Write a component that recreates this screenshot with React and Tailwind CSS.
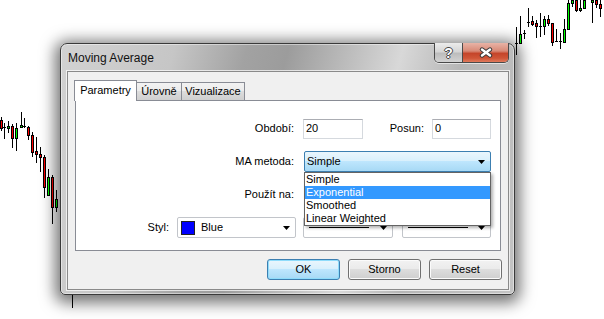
import React from 'react';

// [x, wickTop, wickBottom, bodyTop, bodyBottom, type]  type: r = bear, g = bull, d = doji, w = wick only
const candles = [
  [1, 117, 131, 120, 128, 'r'],
  [4, 123, 139, 127, 127, 'd'],
  [8, 121, 133, 126, 128, 'g'],
  [12, 124, 148, 126, 138, 'r'],
  [16, 123, 151, 128, 138, 'g'],
  [21, 112, 127, 125, 127, 'g'],
  [24, 118, 128, 126, 126, 'd'],
  [28, 126, 140, 127, 135, 'r'],
  [32, 132, 157, 135, 152, 'r'],
  [36, 137, 163, 151, 154, 'r'],
  [40, 147, 172, 154, 157, 'r'],
  [44, 155, 198, 157, 187, 'r'],
  [48, 169, 196, 177, 195, 'g'],
  [52, 175, 224, 177, 207, 'r'],
  [56, 190, 212, 199, 207, 'g'],
  [72, 290, 308, 0, 0, 'w'],
  [516, 27, 55, 43, 43, 'd'],
  [520, 16, 43, 34, 43, 'g'],
  [524, 30, 39, 33, 33, 'd'],
  [528, 8, 27, 22, 22, 'd'],
  [532, 16, 26, 21, 24, 'r'],
  [536, 20, 38, 23, 26, 'r'],
  [540, 13, 37, 26, 26, 'd'],
  [544, 16, 35, 19, 26, 'g'],
  [548, 15, 26, 19, 23, 'r'],
  [552, 23, 46, 23, 42, 'r'],
  [556, 29, 42, 41, 41, 'd'],
  [560, 33, 49, 41, 41, 'd'],
  [564, 19, 42, 29, 42, 'g'],
  [568, 0, 30, 3, 29, 'g'],
  [572, 0, 7, 0, 3, 'g'],
  [576, 0, 12, 0, 10, 'r'],
  [580, 0, 12, 8, 10, 'g'],
  [584, 0, 8, 0, 8, 'g'],
  [592, 0, 23, 0, 2, 'g'],
  [596, 0, 8, 0, 4, 'r'],
  [600, 0, 17, 4, 8, 'r'],
];

const Candle = ({ c }) => {
  const [x, wt, wb, bt, bb, t] = c;
  return (
    <g>
      <rect x={x} y={wt} width={1} height={wb - wt} fill="#000" />
      {t === 'd' && <rect x={x - 1} y={bt} width={3} height={1} fill="#000" />}
      {(t === 'r' || t === 'g') && (
        <>
          <rect x={x - 1} y={bt} width={3} height={bb - bt + 1} fill="#000" />
          <rect x={x} y={bt + 1} width={1} height={Math.max(bb - bt - 1, 0)} fill={t === 'r' ? '#ff0000' : '#00ff00'} />
        </>
      )}
    </g>
  );
};

const Arrow = () => (
  <svg width="7" height="4" viewBox="0 0 7 4" className="shrink-0">
    <path d="M0 0h7L3.5 4z" fill="#000" />
  </svg>
);

const Label = ({ w, children }) => (
  <div className={`${w} shrink-0 text-right pr-px`}>{children}</div>
);

const Combo = ({ className = '', children }) => (
  <div className={`h-[21px] shrink-0 flex items-center border border-[#c2c5ca] rounded-[2px] bg-white pl-[3px] pr-[5px] ${className}`}>
    <div className="flex-1 flex items-center min-w-0">{children}</div>
    <Arrow />
  </div>
);

const Button = ({ children, primary }) => (
  <button
    className={
      primary
        ? 'w-[73px] h-[21px] rounded-[3px] border border-[#3c7fb1] bg-[linear-gradient(#eaf6fd,#d9f0fc_45%,#bee6fd_50%,#a7d9f5)] shadow-[inset_0_0_0_1px_#8fdcfb] text-[11px] font-normal text-black'
        : 'w-[73px] h-[21px] rounded-[3px] border border-[#707070] bg-[linear-gradient(#f2f2f2,#ebebeb_45%,#dddddd_50%,#cfcfcf)] shadow-[inset_0_0_0_1px_#fbfbfb] text-[11px] font-normal text-black'
    }
  >
    {children}
  </button>
);

export default function App() {
  const methods = ['Simple', 'Exponential', 'Smoothed', 'Linear Weighted'];

  return (
    <div className="relative w-[604px] h-[319px] overflow-hidden bg-white font-['Liberation_Sans',Arial,sans-serif] text-[11px] leading-none text-black">
      <svg className="absolute inset-0" width="604" height="319" shapeRendering="crispEdges">
        {candles.map((c, i) => (
          <Candle key={i} c={c} />
        ))}
      </svg>

      {/* dialog window */}
      <div className="absolute left-[60px] top-[43px] w-[455px] h-[252px] flex flex-col rounded-t-[7px] rounded-b-[5px] border border-[#3a3a3a] bg-[linear-gradient(105deg,#d2d2d2_0%,#c6c6c6_22%,#a2a2a2_36%,#9c9c9c_44%,#c2c2c2_58%,#d8d8d8_66%,#b6b6b6_78%,#c4c4c4_100%)] shadow-[0_3px_15px_5px_rgba(0,0,0,0.55),inset_0_0_0_1px_rgba(255,255,255,0.45)]">
        <div className="h-[27px] flex items-start justify-between shrink-0">
          <div className="self-center pl-[7px] pt-px text-[12px] text-[#111]">Moving Average</div>
          <div className="flex -mt-px mr-[5px] h-[20px] rounded-b-[5px] border border-t-0 border-[#4a4a4a] overflow-hidden shadow-[0_1px_0_rgba(255,255,255,0.6)]">
            <div className="w-[28px] h-full flex items-center justify-center border-r border-[#4a4a4a] bg-[linear-gradient(#ebebeb,#d6d6d6_45%,#bdbdbd_55%,#d2d2d2)]">
              <span className="text-[14px] font-bold text-white [text-shadow:-1px_0_#444,1px_0_#444,0_-1px_#444,0_1px_#444]">?</span>
            </div>
            <div className="w-[45px] h-full flex items-center justify-center bg-[linear-gradient(#e8b3a6,#d88a77_42%,#c5452a_55%,#cf5537_80%,#e07a5c)]">
              <svg width="16" height="11" viewBox="0 0 16 11">
                <path d="M4 2.5L12 8.5M12 2.5L4 8.5" stroke="#3a3a3a" strokeWidth="4.4" strokeLinecap="round" />
                <path d="M4 2.5L12 8.5M12 2.5L4 8.5" stroke="#fff" strokeWidth="2.4" strokeLinecap="round" />
              </svg>
            </div>
          </div>
        </div>

        {/* client area */}
        <div className="ml-[6px] mr-[5px] h-[219px] shrink-0 flex flex-col border border-[#8a8a8a] bg-[#f0f0f0] shadow-[0_0_0_1px_rgba(255,255,255,0.7)] pt-[8px]">
          <div className="h-[20px] flex items-end pl-[6px] relative z-10">
            <div className="w-[63px] h-[21px] -mb-px flex items-center justify-center bg-white border border-b-0 border-[#898c95] pb-[2px]">Parametry</div>
            <div className="w-[45px] h-[18px] flex items-center justify-center border border-b-0 border-l-0 border-[#898c95] bg-[linear-gradient(#f2f2f2,#ebebeb_50%,#dddddd_50%,#cfcfcf)]">Úrovně</div>
            <div className="w-[63px] h-[18px] flex items-center justify-center border border-b-0 border-l-0 border-[#898c95] bg-[linear-gradient(#f2f2f2,#ebebeb_50%,#dddddd_50%,#cfcfcf)]">Vizualizace</div>
          </div>

          <div className="ml-[7px] mr-[7px] h-[151px] border border-[#898c95] bg-white pt-[17px]">
            <div className="flex items-center h-[21px]">
              <Label w="w-[219px]">Období:</Label>
              <div className="ml-[8px] w-[60px] h-[20px] flex items-center pl-[2px] border border-[#d5d9de] border-t-[#abadb3]">20</div>
              <Label w="w-[62px]">Posun:</Label>
              <div className="ml-[7px] w-[59px] h-[20px] flex items-center pl-[2px] border border-[#d5d9de] border-t-[#abadb3]">0</div>
            </div>

            <div className="flex items-center h-[21px] mt-[12px] relative z-20">
              <Label w="w-[219px]">MA metoda:</Label>
              <div className="ml-[9px] w-[187px] relative">
                <div className="h-[21px] flex items-center border border-[#3c7fb1] rounded-[2px] bg-[linear-gradient(#eaf6fd,#d9f0fc_45%,#bee6fd_50%,#a7d9f5)] pl-[2px] pr-[5px]">
                  <span className="flex-1">Simple</span>
                  <Arrow />
                </div>
                <div className="absolute left-0 top-full w-full border border-[#646464] bg-white shadow-[2px_2px_3px_rgba(0,0,0,0.3)]">
                  {methods.map((m) => (
                    <div
                      key={m}
                      className={`h-[13px] leading-[13px] pl-[1px] ${m === 'Exponential' ? 'bg-[#3399ff] text-white' : ''}`}
                    >
                      {m}
                    </div>
                  ))}
                </div>
              </div>
            </div>

            <div className="flex items-center h-[21px] mt-[12px]">
              <Label w="w-[219px]">Použít na:</Label>
              <Combo className="ml-[9px] w-[187px]" />
            </div>

            <div className="flex items-center h-[21px] mt-[12px]">
              <Label w="w-[94px]">Styl:</Label>
              <Combo className="ml-[7px] w-[119px]">
                <span className="w-[14px] h-[14px] bg-[#0000ff] border border-[#222] shrink-0" />
                <span className="ml-[6px]">Blue</span>
              </Combo>
              <Combo className="ml-[7px] w-[90px]">
                <span className="w-[60px] h-px bg-black ml-[2px]" />
              </Combo>
              <Combo className="ml-[9px] w-[89px]">
                <span className="w-[60px] h-px bg-black ml-[2px]" />
              </Combo>
            </div>
          </div>

          <div className="mt-[8px] flex justify-end gap-[8px] pr-[6px]">
            <Button primary>OK</Button>
            <Button>Storno</Button>
            <Button>Reset</Button>
          </div>
        </div>
      </div>
    </div>
  );
}
